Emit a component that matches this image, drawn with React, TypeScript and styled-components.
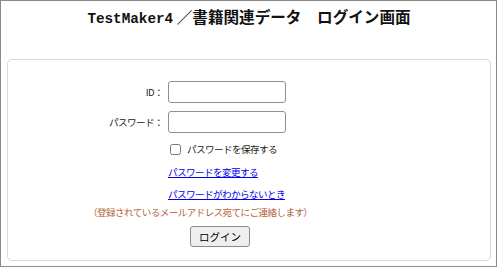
import React, { useState } from 'react';
import styled, { createGlobalStyle } from 'styled-components';

const GlobalStyle = createGlobalStyle`
	html, body {
		margin: 0;
		padding: 0;
		background: #ffffff;
	}
	body {
		font-family: "Noto Sans CJK JP", "Liberation Sans", sans-serif;
		color: #000;
	}
`;

export default function App() {
	const [userId, setUserId] = useState("");
	const [password, setPassword] = useState("");
	const [remember, setRemember] = useState(false);

	return (
		<React.Fragment>
			<GlobalStyle />
			<Frame>
				<Title>
					<Latin>TestMaker4</Latin> ／書籍関連データ　ログイン画面
				</Title>
				<Panel>
					<Form>
						<Row>
							<Label>ID：</Label>
							<TextInput value={userId} onChange={e => setUserId(e.target.value)} />
						</Row>
						<Row>
							<Label>パスワード：</Label>
							<TextInput type="password" value={password} onChange={e => setPassword(e.target.value)} />
						</Row>
						<CheckRow>
							<CheckBox type="checkbox" checked={remember} onChange={e => setRemember(e.target.checked)} />
							<span>パスワードを保存する</span>
						</CheckRow>
						<LinkRow>
							<TextLink href="#">パスワードを変更する</TextLink>
						</LinkRow>
						<LinkRow>
							<TextLink href="#">パスワードがわからないとき</TextLink>
						</LinkRow>
						<Note>（登録されているメールアドレス宛てにご連絡します）</Note>
						<ButtonRow>
							<LoginButton type="button">ログイン</LoginButton>
						</ButtonRow>
					</Form>
				</Panel>
			</Frame>
		</React.Fragment>
	);
}

/**
 * Styled Components...
 */
const Frame = styled.div`
	box-sizing: border-box;
	width: 497px;
	height: 267px;
	border: 1px solid #8a8a8a;
	padding: 0 5px 0 6px;
	display: flex;
	flex-direction: column;
`;

const Title = styled.h1`
	margin: 0;
	height: 58px;
	padding-top: 5px;
	box-sizing: border-box;
	text-align: center;
	font-size: 15.6px;
	font-weight: bold;
	line-height: 20px;
	color: #111;
	font-family: "Noto Sans CJK JP", sans-serif;
`;

const Latin = styled.span`
	font-family: "Liberation Mono", monospace;
	font-size: 14.3px;
	font-weight: bold;
`;

const Panel = styled.div`
	box-sizing: border-box;
	height: 202px;
	border: 1px solid #d8d8d8;
	border-radius: 5px;
	padding: 21px 0 0 85px;
`;

const Form = styled.div`
	display: flex;
	flex-direction: column;
	font-size: 9.6px;
	letter-spacing: -0.6px;
	color: #1a1a1a;
`;

const Row = styled.div`
	display: flex;
	align-items: center;
	height: 22px;
	margin-bottom: 8px;
`;

const Label = styled.label`
	width: 70px;
	margin-right: 5px;
	text-align: right;
`;

const TextInput = styled.input`
	box-sizing: border-box;
	width: 118px;
	height: 22px;
	border: 1px solid #8f8f8f;
	border-radius: 3px;
	padding: 0 4px;
	font-size: 11px;
	outline: none;
`;

const CheckRow = styled.label`
	display: flex;
	align-items: center;
	height: 16px;
	margin-left: 77px;
	margin-top: 0;
`;

const CheckBox = styled.input`
	width: 11px;
	height: 11px;
	margin: 0 6px 0 0;
`;

const LinkRow = styled.div`
	height: 14px;
	line-height: 14px;
	margin-left: 75px;
	margin-top: 8px;
`;

const TextLink = styled.a`
	color: #0000ee;
	text-decoration: underline;
`;

const Note = styled.div`
	height: 14px;
	line-height: 14px;
	margin-top: 4px;
	margin-left: -5px;
	color: #b3643a;
`;

const ButtonRow = styled.div`
	margin-top: 7px;
	margin-left: 97px;
`;

const LoginButton = styled.button`
	box-sizing: border-box;
	width: 60px;
	height: 21px;
	border: 1px solid #8a8a8a;
	border-radius: 3px;
	background: #efefef;
	font-family: "Noto Sans CJK JP", sans-serif;
	font-size: 10.5px;
	color: #000;
	padding: 0;
`;
